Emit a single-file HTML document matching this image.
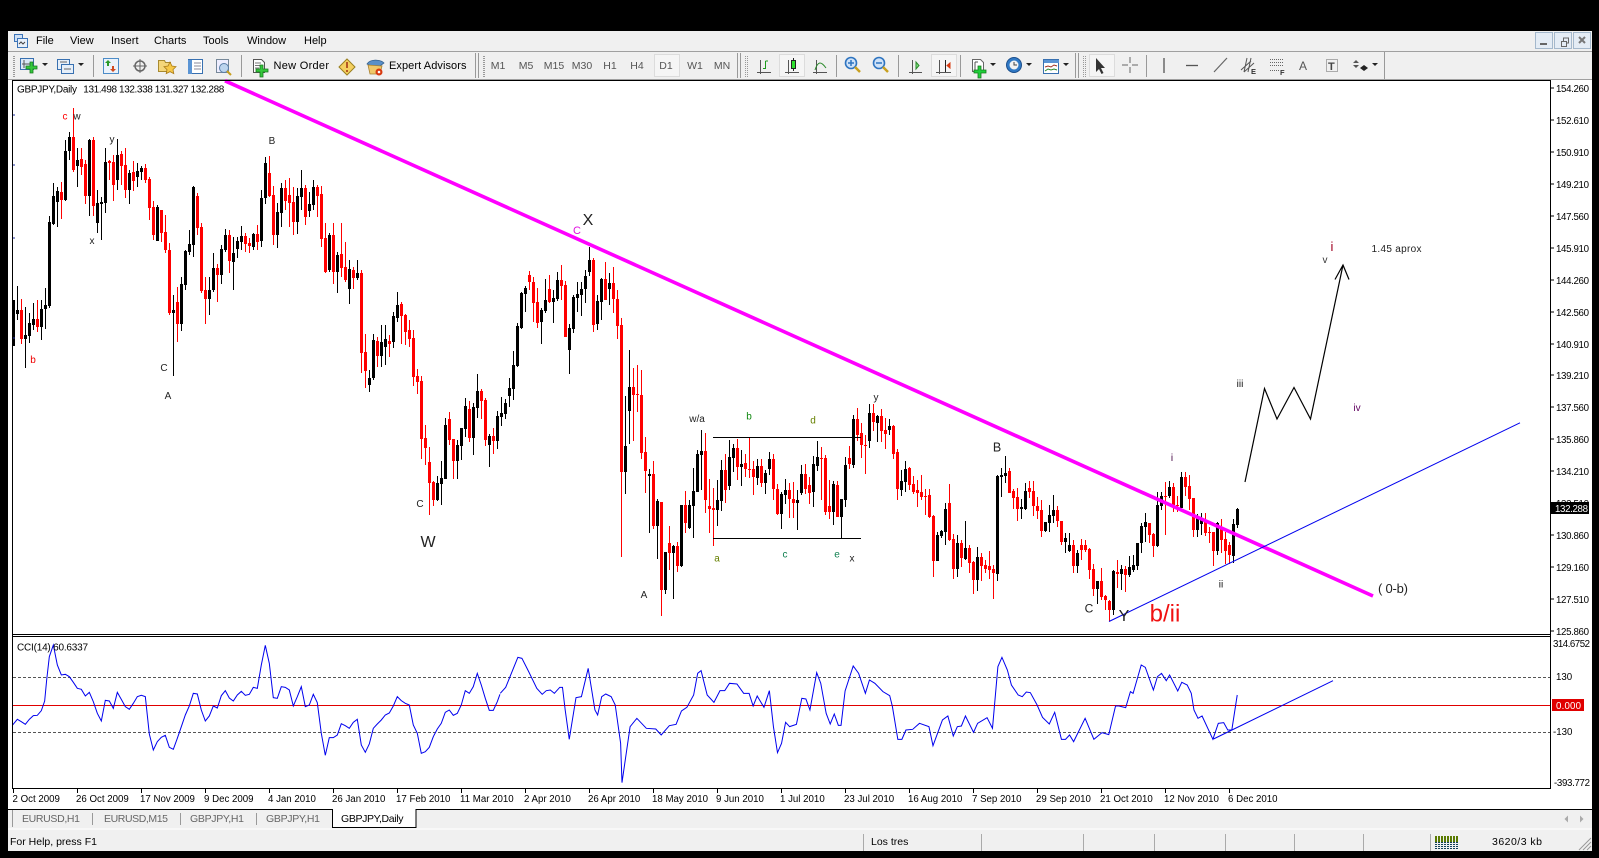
<!DOCTYPE html>
<html><head><meta charset="utf-8"><title>GBPJPY,Daily</title>
<style>
html,body{margin:0;padding:0;background:#000;width:1599px;height:858px;overflow:hidden}
svg{display:block;font-family:"Liberation Sans",sans-serif}
.m{font-size:11px;fill:#000}
.tf{font-size:10.5px;fill:#555;text-anchor:middle}
.p{font-size:9.7px;fill:#000}
.d{font-size:9.7px;fill:#000}
.l{font-size:10px;fill:#222;text-anchor:middle}
.tab{font-size:10.5px;fill:#666}
.c{shape-rendering:crispEdges}
</style></head><body>
<svg width="1599" height="858" viewBox="0 0 1599 858" xmlns="http://www.w3.org/2000/svg">
<rect width="1599" height="858" fill="#000"/>
<!-- app -->
<rect x="8" y="31" width="1584" height="820" fill="#f0f0f0"/>
<rect x="8" y="51" width="1584" height="1" fill="#a0a0a0" class="c"/>
<rect x="8" y="79" width="1584" height="1" fill="#a0a0a0" class="c"/>
<rect x="8" y="80" width="1584" height="730" fill="#fff"/>
<!-- menu -->
<g fill="none" stroke="#3c74b8"><rect x="14.500" y="34.500" width="8" height="7" fill="#cfe0f4"/><rect x="17.500" y="38.500" width="10" height="9" fill="#e8f0fa"/><path d="M19 44l2-2 2 2 2-2" stroke="#444"/></g>
<text class="m" x="36" y="44">File</text><text class="m" x="70" y="44">View</text><text class="m" x="111" y="44">Insert</text><text class="m" x="154" y="44">Charts</text><text class="m" x="203" y="44">Tools</text><text class="m" x="247" y="44">Window</text><text class="m" x="304" y="44">Help</text>
<!-- window buttons -->
<g fill="#e4ecf5" stroke="#a4b8cc" class="c"><rect x="1535.500" y="32.500" width="17" height="16"/><rect x="1554.500" y="32.500" width="17" height="16"/><rect x="1573.500" y="32.500" width="17" height="16"/></g>
<rect x="1540" y="43" width="7" height="2" fill="#666"/>
<path d="M1561.500 41.500h5v5h-5zM1563.500 41v-3h5v5h-2" fill="none" stroke="#666"/>
<path d="M1579 37l6 6M1585 37l-6 6" stroke="#777" stroke-width="2"/>
<!-- grips & separators -->
<g fill="none" stroke="#999" class="c">
<path d="M13.500 56v21M14.500 56v21" stroke-dasharray="1 1"/>
<path d="M93.500 55v22M241.500 55v22M836.500 55v22M898.500 55v22M960.500 55v22M1146.500 55v22M1384.500 52v27"/>
<path d="M475.500 53v25M478.500 53v25M737.500 53v25M740.500 53v25M1075.500 53v25M1078.500 53v25"/>
<path d="M483.500 56v21M484.500 56v21M745.500 56v21M747.500 56v21M1083.500 56v21M1085.500 56v21" stroke-dasharray="1 1"/>
</g>
<!-- toolbar icons -->
<g>
<rect x="20.500" y="58.500" width="13" height="11" fill="#dce8f7" stroke="#3870b0"/>
<path d="M24 60v8M22 64h8" stroke="#555"/>
<path d="M30 62h3v4h4v3h-4v4h-3v-4h-4v-3h4z" fill="#35c83c" stroke="#187a1e" stroke-width=".8"/>
<path d="M42 63h6l-3 3z" fill="#222"/>
<rect x="57.500" y="59.500" width="12" height="10" fill="#e6eff9" stroke="#3870b0"/>
<rect x="61.500" y="64.500" width="12" height="9" fill="#e6eff9" stroke="#3870b0"/>
<path d="M60 62h7M64 69h7" stroke="#666"/>
<path d="M78 63h6l-3 3z" fill="#222"/>
<rect x="103.500" y="58.500" width="15" height="15" fill="#eaf2fb" stroke="#4c8cc8"/>
<path d="M108 60l3 3h-2v3h-2v-3h-2z" fill="#2a9a2a"/><path d="M113 72l-3-3h2v-3h2v3h2z" fill="#d04a20"/>
<circle cx="140" cy="66" r="5" fill="none" stroke="#666" stroke-width="1.500"/><path d="M140 59v14M133 66h14" stroke="#666"/>
<path d="M158.500 60.500h6l1 2h5v9h-12z" fill="#f4d67a" stroke="#a88a30"/><path d="M170 62l2 4 4 .6-3 3 .8 4-3.800-2-3.800 2 .8-4-3-3 4-.6z" fill="#f6c848" stroke="#a87a18" stroke-width=".8"/>
<rect x="188.500" y="59.500" width="14" height="14" fill="#fff" stroke="#3870b0"/><rect x="188" y="60" width="4" height="14" fill="#5a94d4"/><path d="M194 63h7M194 66h7M194 69h7" stroke="#889"/>
<rect x="216.500" y="59.500" width="12" height="13" fill="#eef" stroke="#789"/><circle cx="224" cy="68" r="4.500" fill="#bcd4ee" stroke="#5a7ea8"/><path d="M227 71l4 4" stroke="#c8a020" stroke-width="2"/>
<path d="M253.500 59.500h8l3 3v10h-11z" fill="#fff" stroke="#555"/><path d="M255 63h6M255 65.500h7M255 68h4" stroke="#777"/>
<path d="M260 65h3v4h5v3h-5v5h-3v-5h-4v-3h4z" fill="#35c83c" stroke="#187a1e" stroke-width=".8"/>
<path d="M347 59l8 8-8 8-8-8z" fill="#f5d060" stroke="#9a8020"/><path d="M347 62v6M347 70v2" stroke="#a03010" stroke-width="1.500"/>
<path d="M367 64c3-5 13-5 17-1l-4 3h-9z" fill="#5a90c8" stroke="#34608e" stroke-width=".8"/><path d="M368 65l2 9h10l2-8z" fill="#f0c868" stroke="#a88030" stroke-width=".8"/><circle cx="379" cy="72" r="3.500" fill="#d83a10"/><circle cx="379" cy="72" r="1.300" fill="#fff"/>
</g>
<text class="m" x="273.500" y="69" textLength="55.500" style="font-size:11px">New Order</text>
<text class="m" x="389" y="69" textLength="77.500" style="font-size:11px">Expert Advisors</text>
<!-- timeframes -->
<g fill="#f5f5f5" stroke="#dcdcdc" class="c">
<rect x="654.500" y="54.500" width="25" height="22"/>
<rect x="779.500" y="54.500" width="25" height="22"/>
<rect x="931.500" y="54.500" width="25" height="22"/>
<rect x="1089.500" y="54.500" width="25" height="22"/>
</g>
<text class="tf" x="498" y="69">M1</text><text class="tf" x="526" y="69">M5</text><text class="tf" x="554" y="69">M15</text><text class="tf" x="582" y="69">M30</text><text class="tf" x="610" y="69">H1</text><text class="tf" x="637" y="69">H4</text><text class="tf" x="666" y="69">D1</text><text class="tf" x="695" y="69">W1</text><text class="tf" x="722" y="69">MN</text>
<!-- chart type / zoom icons -->
<g fill="none" stroke="#555" stroke-width="1">
<path d="M760.500 60v14M757 72.500h14"/>
<path d="M788.500 60v14M785 72.500h14"/>
<path d="M816.500 60v14M813 72.500h14"/>
<path d="M912.500 60v14M909 72.500h13"/>
<path d="M939.500 60v14M936 72.500h15"/>
<path d="M765.500 61v8M765.500 61h2.500M763 68.500h2.500" stroke="#1c9a1c"/>
<path d="M793.500 58v13" stroke="#222"/><rect x="791.500" y="60.500" width="4" height="8" fill="#2ee02e" stroke="#222"/>
<path d="M815 70c3-9 6-9 11-2" stroke="#2a8a2a"/>
<path d="M916 62v7l3-3.500z" fill="#7fe07f" stroke="#2a8a2a"/>
<path d="M945.500 60v12" stroke="#222"/><path d="M947 65.500l3-2.500v5z" fill="#d83a10" stroke="#d83a10"/>
</g>
<g>
<circle cx="851" cy="63" r="5.500" fill="#cfe2f8" stroke="#2e74c0" stroke-width="1.600"/><path d="M851 60v6M848 63h6" stroke="#2e74c0" stroke-width="1.500"/><path d="M855 67l5 5" stroke="#c8a020" stroke-width="2.500"/>
<circle cx="879" cy="63" r="5.500" fill="#cfe2f8" stroke="#2e74c0" stroke-width="1.600"/><path d="M876 63h6" stroke="#2e74c0" stroke-width="1.500"/><path d="M883 67l5 5" stroke="#c8a020" stroke-width="2.500"/>
<path d="M972.500 59.500h8l3 3v9h-11z" fill="#fff" stroke="#666"/><path d="M975 62v8M975 62h3" stroke="#555"/>
<path d="M978 66h3v4h5v3h-5v5h-3v-5h-4v-3h4z" fill="#1fd03a" stroke="#187a1e" stroke-width=".8"/>
<path d="M990 63h6l-3 3z" fill="#222"/>
<circle cx="1014" cy="65" r="7.500" fill="#2f78c4" stroke="#1c4f8c"/><circle cx="1014" cy="65" r="4.500" fill="#f2f2f2"/><path d="M1014 62v3h3" stroke="#444" fill="none"/>
<path d="M1026 63h6l-3 3z" fill="#222"/>
<rect x="1043.500" y="59.500" width="15" height="14" fill="#fff" stroke="#3870b0"/><rect x="1044" y="60" width="15" height="3" fill="#5a94d4"/><path d="M1045 67l3-1 3 1 3-2 3 1" stroke="#a03020" fill="none"/><path d="M1045 71l3-2 3 1 3-1 3 1" stroke="#2a8a2a" fill="none"/>
<path d="M1063 63h6l-3 3z" fill="#222"/>
<path d="M1096 58v14l3-3 2.500 5 2-1-2.500-5h4z" fill="#333"/>
<path d="M1130 57v16M1122 65h16" stroke="#666"/><rect x="1128" y="63" width="4" height="4" fill="#f0f0f0"/>
<path d="M1164 58v15" stroke="#555" stroke-width="1.300"/>
<path d="M1186 65.500h12" stroke="#555" stroke-width="1.300"/>
<path d="M1214 72l13-14" stroke="#666" stroke-width="1.200"/>
<path d="M1241 70l10-9M1244 72l10-9M1247 58l-3 14M1251 58l-3 14" stroke="#555"/>
<path d="M1270 59.500h14M1270 62.500h14M1270 65.500h14M1270 70.500h10" stroke="#666" stroke-dasharray="1 1"/>
<text x="1299" y="70" style="font-size:12px;fill:#555">A</text>
<rect x="1326.500" y="59.500" width="11" height="12" fill="none" stroke="#666" stroke-dasharray="1 1"/>
<text x="1328" y="70" style="font-size:11px;font-weight:bold;fill:#444">T</text>
<path d="M1353 63l3-3 3 3zM1353 65l3 3 3-3z" fill="#555"/><path d="M1360 68l4-3 4 3-4 3z" fill="#222"/>
<path d="M1372 63h6l-3 3z" fill="#222"/>
</g>
<text x="1251" y="74" style="font-size:7.500px;fill:#333;font-weight:bold">E</text>
<text x="1280" y="75" style="font-size:7.500px;fill:#333;font-weight:bold">F</text>

<!-- candles -->
<g id="candles" class="c"></g>

<!-- trend lines -->
<line x1="225" y1="80.800" x2="1373" y2="596" stroke="#ff00ff" stroke-width="3.600"/>
<line x1="1109" y1="621.500" x2="1520" y2="422.800" stroke="#0000ee" stroke-width="1"/>
<path d="M713 437.500H861M713 538.500H861" stroke="#000" stroke-width="1.200" class="c"/>
<path d="M1245 482L1264.500 388.500L1277 419L1294 387.500L1310.500 419L1343 265M1335 279.500L1343 265L1349 279.500" fill="none" stroke="#000" stroke-width="1.200"/>

<!-- labels -->
<text x="65" y="119.500" class="l" style="fill:#f00">c</text><text x="77" y="119.500" class="l">w</text>
<text x="33" y="363" class="l" style="fill:#e00">b</text><text x="112" y="142.500" class="l">y</text><text x="92" y="244" class="l">x</text>
<text x="272" y="144" class="l">B</text><text x="164" y="371" class="l">C</text><text x="168" y="399" class="l">A</text>
<text x="420" y="507" class="l">C</text><text x="428" y="547" class="l" style="font-size:16px">W</text>
<text x="588" y="225" class="l" style="font-size:16px">X</text><text x="577" y="234" class="l" style="fill:#e010e0;font-size:11px">C</text>
<text x="697" y="422" class="l">w/a</text><text x="749" y="419.500" class="l" style="fill:#108810">b</text><text x="813" y="423.500" class="l" style="fill:#668000">d</text>
<text x="717" y="561.500" class="l" style="fill:#668000">a</text><text x="785" y="557.500" class="l" style="fill:#108050">c</text><text x="837" y="557.500" class="l" style="fill:#108050">e</text><text x="852" y="561.500" class="l">x</text>
<text x="644" y="598" class="l">A</text><text x="876" y="400.500" class="l">y</text>
<text x="997" y="451.500" class="l" style="font-size:12.500px">B</text><text x="1089" y="612.500" class="l" style="font-size:12px">C</text>
<text x="1124" y="621" class="l" style="font-size:16px">Y</text>
<text x="1165" y="621.500" class="l" style="font-size:24px;fill:#f01010">b/ii</text>
<text x="1172" y="461" class="l" style="fill:#400040">i</text><text x="1221" y="587.500" class="l" style="fill:#111">ii</text>
<text x="1393" y="593" class="l" style="font-size:13px" textLength="30"> ( 0-b)</text>
<text x="1332" y="251" class="l" style="font-size:13px;fill:#a00020">i</text><text x="1325" y="263" class="l" style="fill:#333">v</text>
<text x="1396.500" y="252" class="l" style="font-size:10px" textLength="50">1.45 aprox</text>
<text x="1240" y="387" class="l" style="fill:#111">iii</text><text x="1357" y="411" class="l" style="fill:#600060">iv</text>
<text x="17" y="92.500" class="p" style="font-size:10px" textLength="60">GBPJPY,Daily</text>
<text x="83.300" y="92.500" class="p" style="font-size:10px" textLength="141">131.498 132.338 131.327 132.288</text>

<!-- CCI -->
<g class="c"><rect x="13" y="634" width="1537" height="1" fill="#000"/><rect x="13" y="636" width="1537" height="1" fill="#000"/></g>
<path d="M13 677.500H1550M13 732.500H1550" stroke="#555" stroke-dasharray="3 2" class="c"/>
<path d="M13 705.500H1550" stroke="#e00000" class="c"/>
<g fill="none" stroke="#0000ee">
<polyline transform="translate(0,630) scale(.3333)" vector-effect="non-scaling-stroke" stroke-width="1" points="38,285 52,268 64,275 76,283 88,268 100,257 112,256 124,242 134,213 140,150 148,80 160,45 172,105 184,135 196,133 208,140 220,157 232,175 244,178 256,198 268,187 280,215 292,250 304,273 316,211 328,213 340,235 352,187 364,208 376,230 388,238 400,220 412,200 424,196 436,200 448,312 460,360 472,335 484,322 496,316 508,352 520,358 532,325 544,290 556,255 568,228 580,190 592,192 604,240 616,273 628,258 640,228 652,234 664,197 676,182 688,204 700,213 712,195 724,184 736,196 748,193 760,172 772,175 784,105 796,46 808,100 820,203 832,205 844,170 856,172 868,180 880,228 892,200 904,170 916,230 928,225 940,193 952,218 964,310 976,376 988,323 1000,323 1012,315 1024,281 1036,287 1048,295 1060,277 1072,268 1084,345 1096,367 1108,342 1120,295 1132,282 1144,270 1156,255 1168,249 1180,228 1192,200 1204,212 1216,220 1228,225 1240,285 1252,310 1264,370 1276,365 1288,352 1300,320 1312,297 1324,280 1336,247 1348,240 1360,256 1372,250 1384,225 1396,182 1408,190 1420,170 1432,130 1444,165 1456,205 1468,241 1480,241 1492,215 1500,193"/>
<polyline transform="translate(480,630) scale(.6761,.3333)" vector-effect="non-scaling-stroke" stroke-width="1" points="30,190 38,172 56,82 62,85 72,125 84,175 92,193 98,182 104,180 110,190 118,172 122,172 126,240 132,328 142,203 150,200 160,115 170,240 174,255 180,200 186,192 194,200 200,225 208,340 210,458 222,290 232,265 246,295 260,297 268,315 280,287 290,283 298,243 306,232 316,195 322,130 327,122 336,195 346,217 355,182 362,182 369,160 380,162 390,190 398,190 404,228 410,198 420,232 428,182 434,290 440,368 446,340 452,277 458,290 468,283 476,205 482,207 488,240 498,128 504,160 512,250 518,282 524,252 530,286 534,286 540,183 552,108 560,130 570,190 576,150 584,160 596,185 606,197 610,230 618,328 624,328 630,300 640,298 650,280 664,290 670,347 684,270 692,258 700,318 706,290 712,288 718,258 730,307 736,280 750,263 758,295 766,110 772,82 780,120 786,165 796,195 802,200 808,186 814,188 824,225 832,262 842,282 850,247 860,328 866,328 872,315 878,335 895,265 908,328 920,308 930,314 940,228 945,228 955,233 962,185 966,190 978,105 984,112 996,180 1002,140 1008,130 1015,152 1020,135 1032,183 1038,157 1046,165 1052,190 1056,240 1062,265 1068,258 1084,328 1092,280 1100,278 1106,300 1112,300 1120,195"/>
<line x1="1213.500" y1="739" x2="1333" y2="680.700"/>
</g>
<text x="17" y="650.500" class="p" style="font-size:10px" textLength="71">CCI(14) 60.6337</text>

<!-- frame -->
<g class="c" fill="#000">
<rect x="12" y="80" width="1539" height="1"/>
<rect x="12" y="80" width="1" height="709"/>
<rect x="1550" y="80" width="1" height="709"/>
<rect x="12" y="788" width="1539" height="1"/>
</g>
<path d="M13 115h2M13 165h2M13 238h2M13 338h2" stroke="#2030a0" class="c"/>

<!-- price axis -->
<g id="prices">
<text class="p" x="1556" y="92" textLength="33">154.260</text><text class="p" x="1556" y="124" textLength="33">152.610</text><text class="p" x="1556" y="156" textLength="33">150.910</text><text class="p" x="1556" y="188" textLength="33">149.210</text><text class="p" x="1556" y="220" textLength="33">147.560</text><text class="p" x="1556" y="252" textLength="33">145.910</text><text class="p" x="1556" y="284" textLength="33">144.260</text><text class="p" x="1556" y="316" textLength="33">142.560</text><text class="p" x="1556" y="348" textLength="33">140.910</text><text class="p" x="1556" y="379" textLength="33">139.210</text><text class="p" x="1556" y="411" textLength="33">137.560</text><text class="p" x="1556" y="443" textLength="33">135.860</text><text class="p" x="1556" y="475" textLength="33">134.210</text><text class="p" x="1556" y="507" textLength="33">132.510</text><text class="p" x="1556" y="539" textLength="33">130.860</text><text class="p" x="1556" y="571" textLength="33">129.160</text><text class="p" x="1556" y="603" textLength="33">127.510</text><text class="p" x="1556" y="635" textLength="33">125.860</text>
<path d="M1551 88h3M1551 120h3M1551 152h3M1551 184h3M1551 216h3M1551 248h3M1551 280h3M1551 312h3M1551 344h3M1551 375h3M1551 407h3M1551 439h3M1551 471h3M1551 503h3M1551 535h3M1551 567h3M1551 599h3M1551 631h3" stroke="#000" class="c"/>
<rect x="1551" y="502" width="38" height="12" fill="#000"/><text x="1555" y="512" textLength="33" style="font-size:9.700px;fill:#fff">132.288</text>
<text class="p" x="1553" y="647" textLength="37">314.6752</text>
<text class="p" x="1556" y="680">130</text>
<rect x="1552" y="699" width="32" height="12" fill="#e00000"/><text x="1556" y="709" style="font-size:9.700px;fill:#fff" textLength="25">0.000</text>
<text class="p" x="1553" y="735">-130</text>
<text class="p" x="1554" y="786" textLength="36">-393.772</text>
</g>

<!-- time axis -->
<path d="M13.500 789v4M77.500 789v4M141.500 789v4M205.500 789v4M269.500 789v4M333.500 789v4M397.500 789v4M461.500 789v4M525.500 789v4M589.500 789v4M653.500 789v4M717.500 789v4M781.500 789v4M845.500 789v4M909.500 789v4M973.500 789v4M1037.500 789v4M1101.500 789v4M1165.500 789v4M1229.500 789v4" stroke="#000" class="c"/>
<text class="d" x="12.500" y="802">2 Oct 2009</text><text class="d" x="76" y="802">26 Oct 2009</text><text class="d" x="140" y="802">17 Nov 2009</text><text class="d" x="204" y="802">9 Dec 2009</text><text class="d" x="268" y="802">4 Jan 2010</text><text class="d" x="332" y="802">26 Jan 2010</text><text class="d" x="396" y="802">17 Feb 2010</text><text class="d" x="460" y="802">11 Mar 2010</text><text class="d" x="524" y="802">2 Apr 2010</text><text class="d" x="588" y="802">26 Apr 2010</text><text class="d" x="652" y="802">18 May 2010</text><text class="d" x="716" y="802">9 Jun 2010</text><text class="d" x="780" y="802">1 Jul 2010</text><text class="d" x="844" y="802">23 Jul 2010</text><text class="d" x="908" y="802">16 Aug 2010</text><text class="d" x="972" y="802">7 Sep 2010</text><text class="d" x="1036" y="802">29 Sep 2010</text><text class="d" x="1100" y="802">21 Oct 2010</text><text class="d" x="1164" y="802">12 Nov 2010</text><text class="d" x="1228" y="802">6 Dec 2010</text>

<!-- tabs -->
<rect x="8" y="809" width="1584" height="42" fill="#f0f0f0"/>
<rect x="8" y="809" width="1584" height="1" fill="#000" class="c"/>
<path d="M12.500 810v17M92.500 813v12M180.500 813v12M256.500 813v12" stroke="#999" class="c"/>
<text class="tab" x="22" y="822" textLength="58">EURUSD,H1</text><text class="tab" x="104" y="822" textLength="64">EURUSD,M15</text><text class="tab" x="190" y="822" textLength="54">GBPJPY,H1</text><text class="tab" x="266" y="822" textLength="54">GBPJPY,H1</text>
<path d="M332.500 809v18.500h83.500v-18.500" fill="#fff" stroke="#000" class="c"/>
<text x="341" y="822" textLength="62.500" style="font-size:10.500px;fill:#000">GBPJPY,Daily</text>
<path d="M1568 815.500v7l-3.500-3.500z" fill="#aaa"/><path d="M1580 815.500v7l3.500-3.500z" fill="#aaa"/>
<rect x="8" y="828.500" width="1584" height="1" fill="#fff" class="c"/>
<!-- status -->
<text x="10" y="845" style="font-size:10.500px;fill:#000">For Help, press F1</text>
<text x="871" y="845" style="font-size:10.500px;fill:#000">Los tres</text>
<path d="M863.500 834v17M981.500 834v17M1083.500 834v17M1154.500 834v17M1225.500 834v17M1294.500 834v17M1363.500 834v17M1430.500 834v17" stroke="#aaa" class="c"/>
<g class="c"><path d="M1436 836v6M1439 836v6M1442 836v6M1445 836v6M1448 836v6M1451 836v6M1454 836v6M1457 836v6" stroke="#5a7a00" stroke-width="2"/><path d="M1436 842v7M1439 842v7M1442 842v7M1445 842v7M1448 842v7M1451 842v7M1454 842v7M1457 842v7" stroke="#14405a" stroke-width="2" stroke-dasharray="1 1"/></g>
<text x="1492" y="845" textLength="50" style="font-size:10.500px;fill:#000">3620/3 kb</text>
<path d="M1579 850l12-12M1583 850l8-8M1587 850l4-4" stroke="#999"/>
</svg>
<script>
(function(){
var S=[
[13,80,"b660,660,798,798 b618,690,702,720 r657,690,777,792 b680,765,777,863 b698,729,768,790 b668,717,735,750 r660,717,741,755 b660,687,741,780 b625,675,687,746 b408,426,678,684 b308,348,432,435 b320,333,366,440 r305,336,360,417 b180,213,360,363 b156,171,213,240 r84,171,270,276 b204,240,258,321 r204,237,261,285 r240,252,348,372 b177,180,348,408 r171,180,378,408 b330,369,430,458 b350,366,372,480 b204,246,369,399 r240,243,250,300 r225,246,315,362 b178,225,300,330 r213,222,258,315 r205,255,330,354 b270,279,330,372 r243,276,303,333 b250,273,291,320 b258,264,276,300 r252,264,300,310 r290,297,384,420 r363,381,465,480 b375,381,483,483 r390,390,459,485 r405,456,510,520 r490,510,699,705 b645,690,698,887 r620,666,732,785 b590,612,732,752 b510,513,615,630 b450,492,516,525 b318,321,495,530 r340,348,444,465 r430,440,633,640 r590,630,657,732 b590,630,657,705 b520,564,630,635 r552,564,585,665 b495,507,585,612 b448,465,510,516 r450,465,543,578 b470,519,546,630 b470,483,507,534 b438,468,486,510 r460,468,492,516 r475,489,498,520 b460,462,501,510 r435,462,486,510 b330,354,483,500 b232,249,354,372 r228,279,348,350 r318,345,465,495 b370,396,465,504 b310,324,399,440 r300,324,363,390 r295,345,369,440 r320,366,426,465 b325,348,426,462 b270,324,351,390 r315,324,411,435 b335,372,393,412 b300,321,375,390 r315,321,348,410 r318,342,477,500 r430,474,577,580 b460,465,570,575 r428,465,576,612 b515,525,576,638 r430,522,564,590 r487,561,600,605 b540,567,627,672 r560,570,594,627 b540,579,594,600 r570,579,819,880 r762,816,873,925 b870,893,915,935 b762,780,895,900 r770,783,828,860 b735,785,828,860 b735,777,801,855 r765,783,792,830"],
[393,240,"b216,228,306,324 b155,195,234,246 r186,192,228,312 r222,225,276,315 r240,270,297,320 r270,294,411,438 r387,408,426,462 r408,423,597,657 r555,594,624,675 r621,666,729,825 r723,726,780,798 b708,729,780,783 b663,714,732,795 b534,555,717,717 r516,537,600,615 r597,597,663,717 b600,615,663,717 b564,564,618,660 b474,498,567,591 r483,507,594,606 b489,501,594,645 b402,453,504,534 r447,453,483,537 r474,480,600,618 b582,588,615,681 r564,588,603,642 b513,528,603,627 b471,519,531,558 b477,489,522,537 b414,444,468,501 b333,375,447,480 b250,258,378,381 b156,159,264,267 b138,144,162,216 r93,105,126,150 r111,126,189,246 r144,186,249,264 b204,210,246,312 b117,180,213,219 r105,147,186,190 b150,174,186,249 b96,120,177,183 r75,120,138,180 r123,135,291,291 b252,264,330,402 b165,171,267,279 b126,162,174,216 b126,147,165,228 b90,108,147,189 b20,60,96,108 r54,60,255,276 b165,183,252,270 b114,117,186,240 r66,117,180,180 b99,129,147,195 r81,129,177,219 r150,177,258,297 r234,255,696,951 b468,618,696,762 b330,441,513,612 r384,441,465,603 r375,462,465,516 r390,465,639,657 r591,636,693,759 b687,702,708,879 r663,702,858,867 b777,783,858,957"],
[661,400,"r305,306,570,648 b456,456,570,582 r378,429,459,510 b435,438,459,597 r426,438,498,516 b315,315,498,501 r273,315,369,400 b300,315,384,387 b204,273,318,414 b150,162,276,276 b90,153,165,270 r99,153,300,340 r237,318,327,400 r264,324,330,438 b240,300,330,378 b180,210,303,333 r162,210,270,309 b120,171,258,270 b132,144,174,216 r117,144,201,240 b150,192,201,258 r162,189,207,232 r112,207,210,235 r183,207,231,285 b177,198,234,255 r177,198,249,262 b210,219,249,282 b156,177,207,225 r162,177,267,300 r252,267,342,345 b276,282,342,387 b237,270,285,312 r249,270,297,354 r246,297,309,354 b270,300,309,390 b195,222,279,285 r193,222,267,283 r231,255,279,312 b168,192,276,321 b123,171,198,213 r141,174,177,300 r165,174,336,345 r240,318,336,357 b243,252,336,375 r243,255,351,351 b297,297,351,415 b172,195,300,320 r138,174,192,207 b45,57,195,204"],
[857,390,"r54,87,135,153 r100,129,165,204 r135,165,168,252 b42,69,153,174 r42,69,96,123 b75,78,99,156 r57,78,123,156 r84,120,132,177 b87,108,120,135 r105,108,192,207 r177,186,297,330 b240,273,300,318 b213,237,276,306 r231,234,285,300 r258,282,306,312 r270,300,309,351 r255,306,321,330 r296,318,320,375 r297,315,381,384 r375,378,513,561 b425,435,513,513 b420,423,438,444 b340,357,426,465 r282,339,450,453 r432,447,537,567 b435,459,537,561 r450,459,504,531 b393,474,507,510 r465,474,519,548 r513,516,570,612 b471,501,570,603 r489,501,528,573 r510,525,537,549 r483,528,540,567 r525,537,549,627 b255,258,552,573 b234,255,261,321 b198,249,258,279 r234,243,309,309 r297,303,324,357 r294,321,357,393 b327,351,357,387 b279,303,357,360 r273,294,306,324 r273,303,348,378 r321,348,363,387 r330,360,423,441 b396,396,423,426 b345,375,399,426 b315,360,378,400 r348,360,393,412 r393,393,456,465 b429,444,456,489 b429,465,483,486 r450,465,528,549 b480,489,528,549 r447,465,480,510 r450,465,480,487 r474,477,540,567 r522,537,597,618 b573,573,597,642 r534,573,621,630 r615,618,630,660 r630,633,660,693 b540,543,660,675 r510,546,552,594 b525,537,552,600 r528,537,555,606 b498,531,555,560"],
[1133,420,"b405,435,450,457 b369,369,438,450 b310,318,369,400 b280,306,321,365 r310,309,345,370 r340,342,378,410 b215,255,378,380 b215,228,258,270 r185,228,232,345 b183,201,228,235 r190,201,255,276 r228,255,258,276 b155,170,264,264 r157,171,201,228 r165,198,237,270 r234,234,330,350 b282,294,330,350 b280,294,312,345 r278,306,339,348 r320,335,339,370 r338,336,393,437 b306,309,393,405 r297,322,360,400 r335,357,393,432 r365,375,405,432 b297,312,408,430 b264,267,315,324"]
];
var r='',b='';
S.forEach(function(s){
 s[2].split(' ').forEach(function(e,i){
  var col=e[0],v=e.slice(1).split(',').map(function(n){return Math.round(s[1]+n/3)});
  var x=s[0]+4*i;
  var bh=Math.max(1,v[2]-v[1]);
  var d='M'+x+' '+v[0]+'h1V'+v[3]+'h-1zM'+(x-1)+' '+v[1]+'h3v'+bh+'h-3z';
  if(col=='r')r+=d;else b+=d;
 });
});
document.getElementById('candles').innerHTML='<path fill="#f00" d="'+r+'"/><path fill="#000" d="'+b+'"/>';
})();
</script>
</body></html>
